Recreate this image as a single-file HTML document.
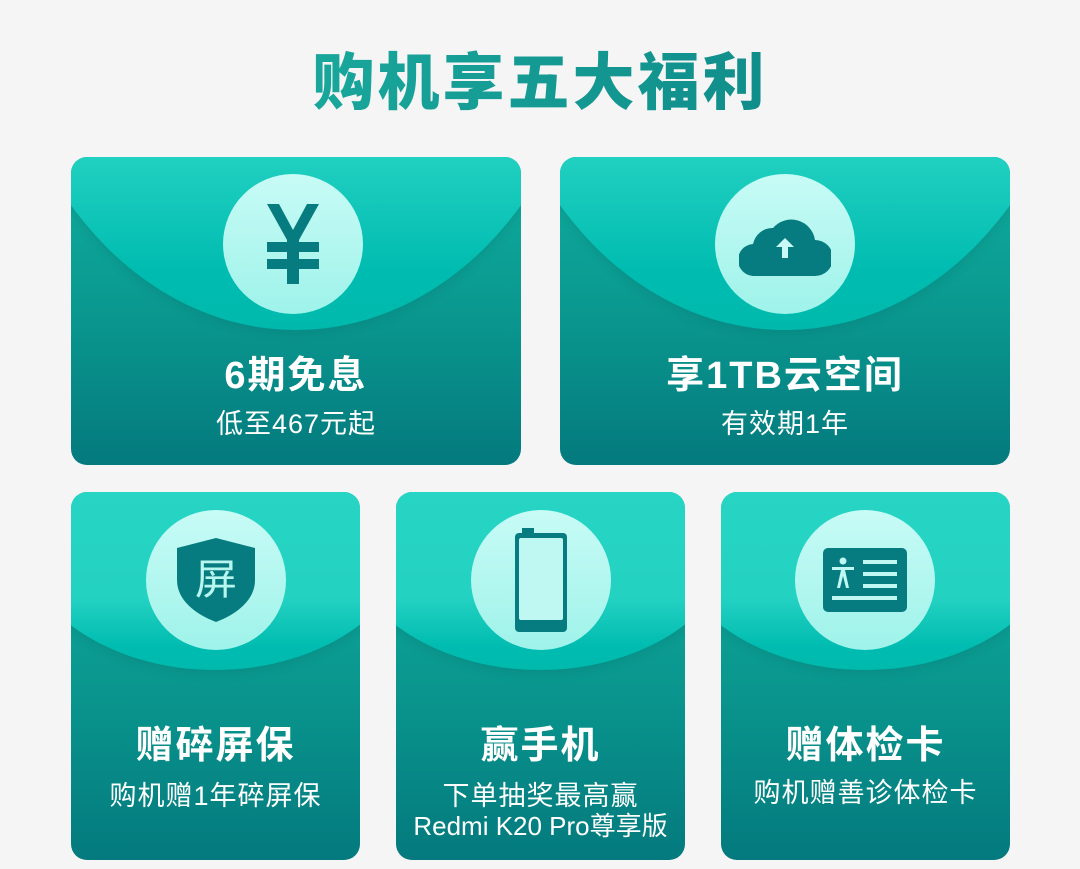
<!DOCTYPE html>
<html><head><meta charset="utf-8"><style>
body{margin:0;width:1080px;height:869px;background:#f5f5f6;position:relative;overflow:hidden;font-family:"Liberation Sans","Noto Sans CJK SC",sans-serif;}
h1{position:absolute;top:44px;left:0;width:1080px;text-align:center;margin:0;font-size:62px;font-weight:900;letter-spacing:3px;color:#0f9a93;background:linear-gradient(90deg,#1fb8a6,#0a7c80);-webkit-background-clip:text;background-clip:text;-webkit-text-fill-color:transparent;line-height:80px}
.card{position:absolute;border-radius:16px;overflow:hidden;background:linear-gradient(180deg,#10ad9f 0%,#0a988f 50%,#047a7e 100%);color:#fff;text-align:center}
.ell{position:absolute;border-radius:50%;background:linear-gradient(180deg,#2bd8c8 0%,#24d2c2 75%,#00bcb0 92%,#00b9ad 100%);box-shadow:0 4px 10px rgba(0,80,80,.15)}
.circ{position:absolute;width:140px;height:140px;border-radius:50%;background:linear-gradient(180deg,#c8fbf6,#9ef3ea);display:flex;align-items:center;justify-content:center}
.t{position:absolute;left:0;width:100%;font-weight:bold;font-size:38px;line-height:42px;letter-spacing:2px}
.s{position:absolute;left:0;width:100%;font-size:27px;line-height:31px;letter-spacing:1px}
</style></head><body>
<h1>购机享五大福利</h1>

<div class="card" style="left:71px;top:157px;width:450px;height:308px">
 <div class="ell" style="left:-75px;top:-565px;width:600px;height:738px"></div>
 <div class="circ" style="left:152px;top:17px">
  <svg width="52" height="80" viewBox="0 0 52 80"><g fill="#077c80"><polygon points="0,0 12,0 26,26 40,0 52,0 32,36 20,36"/><rect x="20" y="32" width="12" height="48"/><rect x="0" y="38" width="52" height="10"/><rect x="0" y="55" width="52" height="10"/></g></svg>
 </div>
 <div class="t" style="top:198px">6期免息</div>
 <div class="s" style="top:252px">低至467元起</div>
</div>

<div class="card" style="left:560px;top:157px;width:450px;height:308px">
 <div class="ell" style="left:-75px;top:-565px;width:600px;height:738px"></div>
 <div class="circ" style="left:155px;top:17px">
  <svg width="92" height="64" viewBox="0 0 92 64"><path fill="#077c80" d="M16 64 A16 16 0 0 1 14 32 A20 20 0 0 1 34 16 A24 24 0 0 1 76 28 A18 18 0 0 1 76 64 Z"/><path fill="#c8fbf6" d="M46 26 L37 35 H43 V46 H49 V35 H55 Z"/></svg>
 </div>
 <div class="t" style="top:198px">享1TB云空间</div>
 <div class="s" style="top:252px">有效期1年</div>
</div>

<div class="card" style="left:71px;top:492px;width:289px;height:368px">
 <div class="ell" style="left:-56px;top:-114px;width:400px;height:292px"></div>
 <div class="circ" style="left:75px;top:18px">
  <svg width="78" height="84" viewBox="0 0 78 84"><path fill="#077c80" d="M39 0 L78 10 V42 C78 62 60 76 39 84 C18 76 0 62 0 42 V10 Z"/><text x="39" y="56" text-anchor="middle" font-size="42" fill="#b8f7f0" font-family="Noto Sans CJK SC,sans-serif">屏</text></svg>
 </div>
 <div class="t" style="top:233px">赠碎屏保</div>
 <div class="s" style="top:289px">购机赠1年碎屏保</div>
</div>

<div class="card" style="left:396px;top:492px;width:289px;height:368px">
 <div class="ell" style="left:-56px;top:-114px;width:400px;height:292px"></div>
 <div class="circ" style="left:75px;top:18px">
  <svg width="54" height="104" viewBox="0 0 54 104"><rect x="8" y="0" width="12" height="6" fill="#077c80"/><rect x="1" y="5" width="52" height="99" rx="4" fill="#077c80"/><rect x="5" y="10" width="44" height="82" rx="2" fill="#bff8f2"/></svg>
 </div>
 <div class="t" style="top:233px">赢手机</div>
 <div class="s" style="top:289px">下单抽奖最高赢</div>
 <div class="s" style="top:319px;letter-spacing:0;font-size:26px">Redmi K20 Pro尊享版</div>
</div>

<div class="card" style="left:721px;top:492px;width:289px;height:368px">
 <div class="ell" style="left:-56px;top:-114px;width:400px;height:292px"></div>
 <div class="circ" style="left:74px;top:18px">
  <svg width="84" height="64" viewBox="0 0 84 64"><rect width="84" height="64" rx="5" fill="#077c80"/><g fill="#bff8f2"><circle cx="20" cy="13" r="3.5"/><rect x="9" y="19" width="22" height="3"/><polygon points="18,22 22,22 26,40 23,40 20,28 17,40 14,40"/><rect x="40" y="12" width="34" height="4"/><rect x="40" y="24" width="34" height="4"/><rect x="40" y="36" width="34" height="4"/><rect x="9" y="48" width="65" height="4"/></g></svg>
 </div>
 <div class="t" style="top:233px">赠体检卡</div>
 <div class="s" style="top:286px">购机赠善诊体检卡</div>
</div>
</body></html>
